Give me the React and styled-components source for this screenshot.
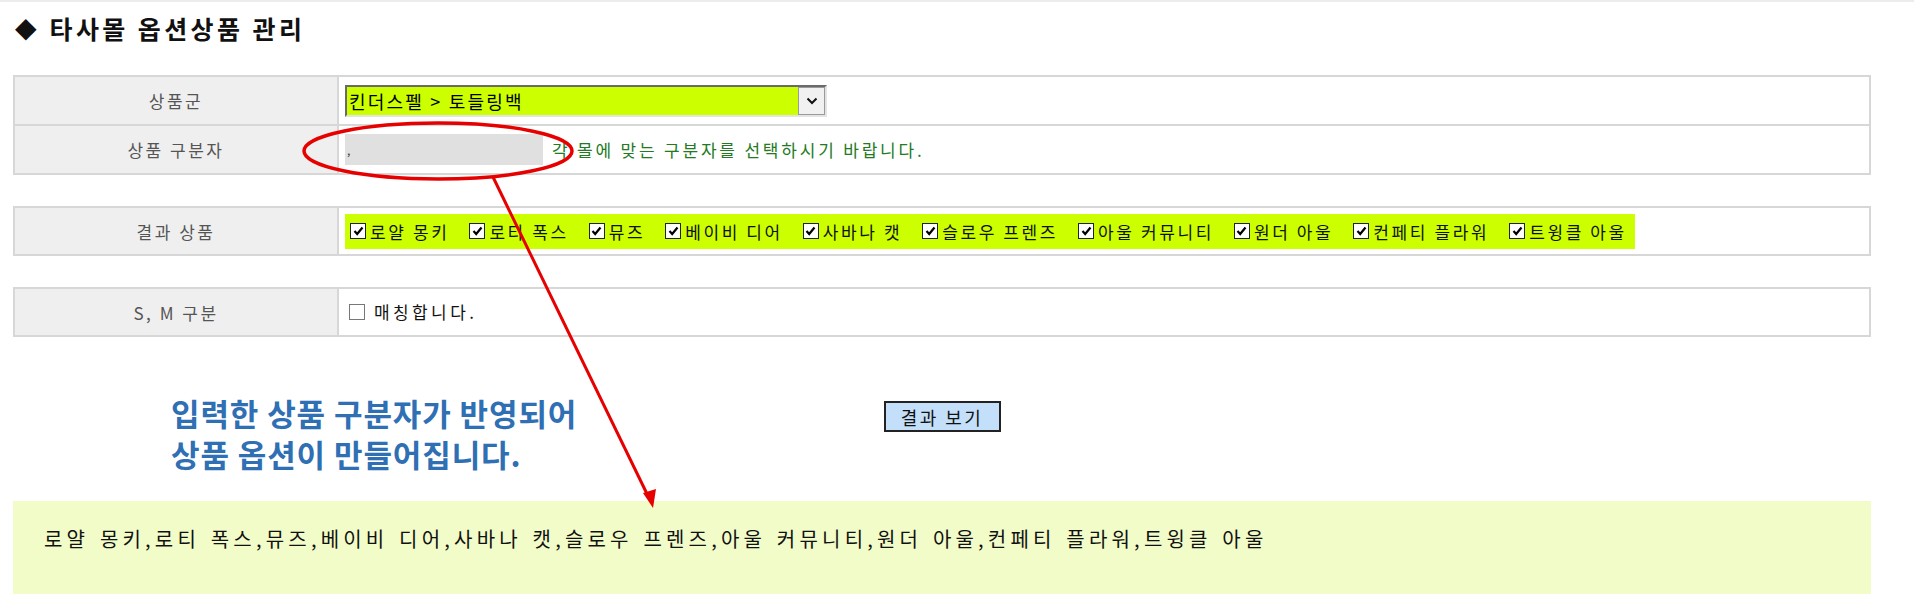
import React from "react";
import styled, { createGlobalStyle } from "styled-components";

const GlobalStyle = createGlobalStyle`
  html, body { margin: 0; padding: 0; background: #fff; }
  body { font-family: "Noto Sans CJK KR", "Noto Sans", sans-serif; color: #111; }
`;

const Page = styled.div`
  position: relative;
  width: 1914px;
  height: 615px;
  box-sizing: border-box;
  border-top: 2px solid #ececec;
  padding: 0 43px 0 13px;
  overflow: hidden;
`;

const Title = styled.h1`
  margin: 11px 0 0 2px;
  height: 30px;
  display: flex;
  align-items: center;
  gap: 13px;
  font-size: 25px;
  line-height: 30px;
  font-weight: 700;
  letter-spacing: 3.4px;
  color: #111;
`;

const Diamond = styled.span`
  font-size: 28px;
  letter-spacing: 0;
  font-family: "DejaVu Sans", sans-serif;
`;

const Table = styled.table`
  width: 100%;
  border-collapse: collapse;
  border: 2px solid #d7d7d7;
  margin-top: ${(p) => p.$mt}px;
`;

const Row = styled.tr`
  height: ${(p) => p.$h}px;
  & + & td, & + & th { border-top: 2px solid #d7d7d7; }
`;

const Label = styled.th`
  width: 322px;
  background: #efefef;
  color: #555;
  font-weight: 400;
  font-size: 17px;
  letter-spacing: 2.5px;
  text-align: center;
  border-right: 2px solid #d7d7d7;
  padding: 0;
`;

const Cell = styled.td`
  padding: 0 0 0 6px;
  vertical-align: middle;
`;

const FakeSelect = styled.div`
  width: 482px;
  height: 32px;
  box-sizing: border-box;
  display: flex;
  align-items: stretch;
  border-top: 2px solid #6a6a6a;
  border-left: 2px solid #6a6a6a;
  border-right: 2px solid #e4e4e4;
  border-bottom: 2px solid #e4e4e4;
  background: #ccff00;
`;

const SelectText = styled.span`
  flex: 1;
  display: flex;
  align-items: center;
  padding-left: 2px;
  font-size: 18px;
  letter-spacing: 2.2px;
  color: #000;
`;

const SelectButton = styled.span`
  width: 27px;
  box-sizing: border-box;
  display: flex;
  align-items: center;
  justify-content: center;
  background: #f1f1f1;
  border: 1px solid #9a9a9a;
`;

const InlineRow = styled.div`
  display: flex;
  align-items: center;
  gap: 9px;
`;

const SeparatorInput = styled.input`
  width: 198px;
  height: 31px;
  box-sizing: border-box;
  border: none;
  background: #e0e0e0;
  padding: 0 0 0 2px;
  font-size: 12px;
  color: #333;
  font-family: inherit;
  outline: none;
`;

const Hint = styled.span`
  color: #237a23;
  font-size: 17px;
  letter-spacing: 2.8px;
`;

const Highlight = styled.div`
  display: inline-flex;
  align-items: center;
  height: 35px;
  padding: 0 8px 0 5px;
  background: #ccff00;
  gap: 20px;
`;

const CheckItem = styled.label`
  display: inline-flex;
  align-items: center;
  gap: 4px;
  font-size: 17px;
  letter-spacing: 2.6px;
  white-space: pre;
  color: #111;
`;

const Box = styled.span`
  width: 16px;
  height: 16px;
  box-sizing: border-box;
  display: inline-flex;
  align-items: center;
  justify-content: center;
  background: #fff;
  border: 1px solid ${(p) => (p.$checked ? "#222" : "#777")};
`;

const MatchItem = styled(CheckItem)`
  gap: 9px;
  letter-spacing: 3.4px;
  margin-left: 4px;
`;

const ActionArea = styled.div`
  position: relative;
  height: 164px;
  display: flex;
  justify-content: center;
  align-items: flex-start;
  padding-top: 64px;
  box-sizing: border-box;
`;

const ResultButton = styled.button`
  width: 117px;
  height: 31px;
  box-sizing: border-box;
  background: #c4dffa;
  border: 2px solid #222;
  font-family: inherit;
  font-size: 18px;
  letter-spacing: 2.4px;
  color: #111;
  padding: 0;
`;

const Annotation = styled.p`
  position: absolute;
  left: 158px;
  top: 55px;
  margin: 0;
  color: #2f6fb3;
  font-size: 31px;
  font-weight: 700;
  line-height: 41px;
  letter-spacing: 0.9px;
`;

const ResultBox = styled.div`
  height: 93px;
  box-sizing: border-box;
  background: #f1fcc8;
  padding: 23px 0 0 31px;
  font-size: 20px;
  letter-spacing: 4.2px;
  word-spacing: 2px;
  color: #111;
`;

const Overlay = styled.svg`
  position: absolute;
  left: 0;
  top: 0;
  pointer-events: none;
`;

const items = [
  "로얄 몽키",
  "로티 폭스",
  "뮤즈",
  "베이비 디어",
  "사바나 캣",
  "슬로우 프렌즈",
  "아울 커뮤니티",
  "원더 아울",
  "컨페티 플라워",
  "트윙클 아울",
];

const Check = () => (
  <svg width="11" height="10" viewBox="0 0 11 10">
    <path d="M1.5 5 L4.2 8 L9.5 1.5" stroke="#000" strokeWidth="2.2" fill="none" />
  </svg>
);

export default function App() {
  return (
    <>
      <GlobalStyle />
      <Page>
        <Title>
          <Diamond>◆</Diamond>
          타사몰 옵션상품 관리
        </Title>

        <Table $mt={32}>
          <tbody>
            <Row $h={49}>
              <Label>상품군</Label>
              <Cell>
                <FakeSelect role="combobox">
                  <SelectText>킨더스펠 &gt; 토들링백</SelectText>
                  <SelectButton>
                    <svg width="12" height="8" viewBox="0 0 12 8">
                      <path d="M1.5 1.5 L6 6 L10.5 1.5" stroke="#111" strokeWidth="2" fill="none" />
                    </svg>
                  </SelectButton>
                </FakeSelect>
              </Cell>
            </Row>
            <Row $h={49}>
              <Label>상품 구분자</Label>
              <Cell>
                <InlineRow>
                  <SeparatorInput readOnly value="," />
                  <Hint>각 몰에 맞는 구분자를 선택하시기 바랍니다.</Hint>
                </InlineRow>
              </Cell>
            </Row>
          </tbody>
        </Table>

        <Table $mt={31}>
          <tbody>
            <Row $h={48}>
              <Label>결과 상품</Label>
              <Cell>
                <Highlight>
                  {items.map((it) => (
                    <CheckItem key={it}>
                      <Box $checked>
                        <Check />
                      </Box>
                      {it}
                    </CheckItem>
                  ))}
                </Highlight>
              </Cell>
            </Row>
          </tbody>
        </Table>

        <Table $mt={31}>
          <tbody>
            <Row $h={48}>
              <Label>S, M 구분</Label>
              <Cell>
                <MatchItem>
                  <Box />
                  매칭합니다.
                </MatchItem>
              </Cell>
            </Row>
          </tbody>
        </Table>

        <ActionArea>
          <Annotation>
            입력한 상품 구분자가 반영되어
            <br />
            상품 옵션이 만들어집니다.
          </Annotation>
          <ResultButton>결과 보기</ResultButton>
        </ActionArea>

        <ResultBox>
          {items.join(",")}
        </ResultBox>

        <Overlay width="1914" height="615" viewBox="0 0 1914 615">
          <ellipse cx="438" cy="149" rx="134" ry="28" fill="none" stroke="#e60000" strokeWidth="3.5" />
          <line x1="493" y1="175" x2="649" y2="496" stroke="#e60000" strokeWidth="3" />
          <polygon points="653,506 643,491 656,487" fill="#e60000" />
        </Overlay>
      </Page>
    </>
  );
}
